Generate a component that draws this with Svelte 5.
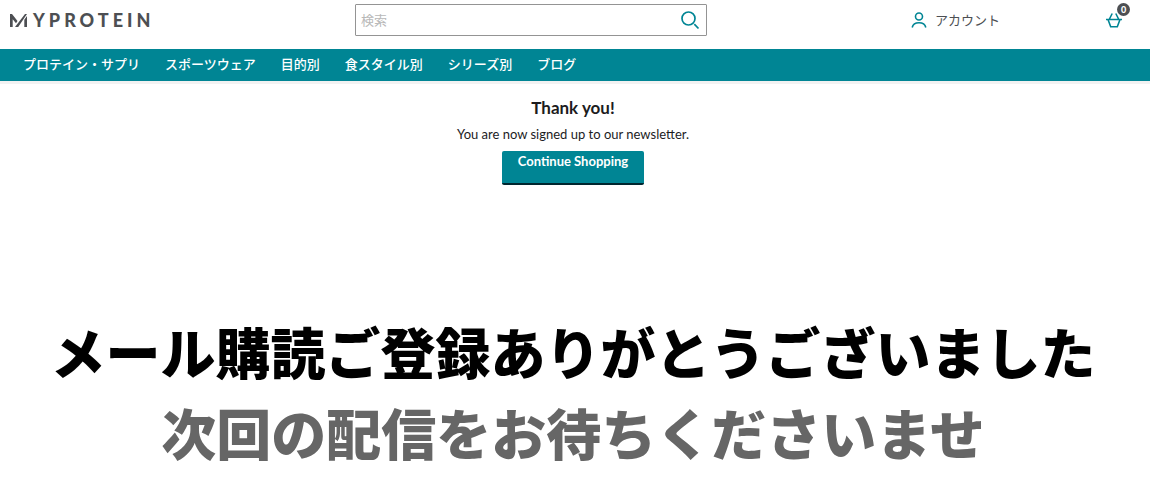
<script lang="ts">
  const links = ['プロテイン・サプリ', 'スポーツウェア', '目的別', '食スタイル別', 'シリーズ別', 'ブログ'];
  let query = $state('');
  let basketCount = $state(0);
</script>

<div class="page">
  <header>
    <a class="logo" href="#home" aria-label="MYPROTEIN">
      <svg viewBox="0 0 19 13" width="19" height="13" aria-hidden="true">
        <path d="M0 13V0h2l5.500 7L6 9.300 2.700 5.200V13zM5 13 15 0h2L8.200 13zM14.300 5.800 17 2v11h-2.700z" fill="#4d4f53" />
      </svg>
      <span>YPROTEIN</span>
    </a>

    <form class="search" role="search" onsubmit={(e) => e.preventDefault()}>
      <input type="search" aria-label="検索" placeholder="検索" bind:value={query} />
      <button type="submit" aria-label="検索する">
        <svg viewBox="0 0 20 20" width="20" height="20" fill="none" stroke="#008594" stroke-width="1.7">
          <circle cx="8.500" cy="8.500" r="6.500" />
          <path d="M14.300 14.200 18.500 18.500" />
        </svg>
      </button>
    </form>

    <div class="tools">
      <a class="account" href="#account">
        <svg viewBox="0 0 16 16" width="16" height="16" fill="none" stroke="#008594" stroke-width="1.600">
          <circle cx="8" cy="4.500" r="3.500" />
          <path d="M1.200 15.500C1.900 12.300 4.400 10.800 8 10.800s6.100 1.500 6.800 4.700" />
        </svg>
        <span>アカウント</span>
      </a>
      <a class="basket" href="#basket" aria-label="カート">
        <svg viewBox="0 0 16 16" width="16" height="16" fill="none" stroke="#008594" stroke-width="1.600">
          <path d="M0 7.500h16M2 7.500 4.700 14.800h6.600L14 7.500M3.200 7.500 6.200 1.500M12.800 7.500 9.800 1.500" />
        </svg>
        <span class="count">{basketCount}</span>
      </a>
    </div>
  </header>

  <nav aria-label="メイン">
    {#each links as link}
      <a href="#{link}">{link}</a>
    {/each}
  </nav>

  <main>
    <section class="confirm">
      <h1>Thank you!</h1>
      <p>You are now signed up to our newsletter.</p>
      <a class="continue" href="#shop">Continue Shopping</a>
    </section>
    <section class="banner" lang="ja">
      <p>メール購読ご登録ありがとうございました</p>
      <p class="next">次回の配信をお待ちくださいませ</p>
    </section>
  </main>
</div>

<style>
  :global(body) {
    margin: 0;
    background: #fff;
    overflow: hidden;
  }
  .page {
    font-family: Lato, "Noto Sans CJK JP", sans-serif;
    font-size: 13px;
    color: #1c1c1e;
  }
  a {
    color: inherit;
    text-decoration: none;
  }
  svg {
    display: block;
  }
  header {
    display: grid;
    grid-template-columns: 30vw 352px 1fr;
    align-items: center;
    height: 40px;
    padding: 0 20px 9px 10px;
  }
  .logo {
    display: flex;
    align-items: center;
    gap: 4px;
    color: #4d4f53;
    font-size: 18px;
    font-weight: 900;
    line-height: 20px;
    letter-spacing: 4px;
  }
  .search {
    display: flex;
    align-items: center;
    box-sizing: border-box;
    height: 32px;
    border: 1px solid #949494;
    border-radius: 1px;
  }
  .search input {
    flex: 1;
    min-width: 0;
    padding: 0 5px;
    border: 0;
    outline: 0;
    background: none;
    font: inherit;
    appearance: none;
  }
  .search input::placeholder {
    color: #b8b8b8;
  }
  .search button {
    padding: 0 6px;
    border: 0;
    background: none;
  }
  .tools {
    display: flex;
    justify-content: flex-end;
    align-items: center;
    gap: 106px;
    color: #4d4f53;
  }
  .account {
    display: flex;
    align-items: center;
    gap: 8px;
    font-family: "Noto Sans CJK JP", sans-serif;
    line-height: 20px;
  }
  .basket {
    position: relative;
    padding-right: 8px;
  }
  .count {
    position: absolute;
    top: -9px;
    right: 0;
    width: 13px;
    border-radius: 50%;
    background: #4d4f53;
    color: #fff;
    font-size: 9px;
    font-weight: 900;
    line-height: 13px;
    text-align: center;
  }
  nav {
    display: flex;
    gap: 25px;
    padding: 0 23px 2px;
    border-bottom: 3px solid #f2f2f2;
    background: #008594;
    color: #fff;
    font-weight: 500;
    line-height: 30px;
    font-family: "Noto Sans CJK JP", sans-serif;
  }
  .confirm {
    display: flex;
    flex-direction: column;
    align-items: center;
    padding: 11px 4px 0 0;
  }
  h1 {
    margin: 0;
    font-size: 17px;
    font-weight: 700;
    line-height: 26px;
  }
  .confirm p {
    margin: 0;
    line-height: 26px;
  }
  .continue {
    box-sizing: border-box;
    height: 34px;
    margin-top: 4px;
    padding: 0 16px;
    border-bottom: 2px solid #00262f;
    border-radius: 2px;
    background: #008594;
    color: #fff;
    font-weight: 700;
    line-height: 20px;
  }
  .banner {
    padding: 125px 4px 0 0;
    color: #000;
    font-family: "Noto Sans CJK JP", sans-serif;
    font-size: 55px;
    font-weight: 900;
    line-height: 81px;
    text-align: center;
    white-space: nowrap;
  }
  .banner p {
    margin: 0;
  }
  .banner .next {
    color: #666;
  }
</style>
